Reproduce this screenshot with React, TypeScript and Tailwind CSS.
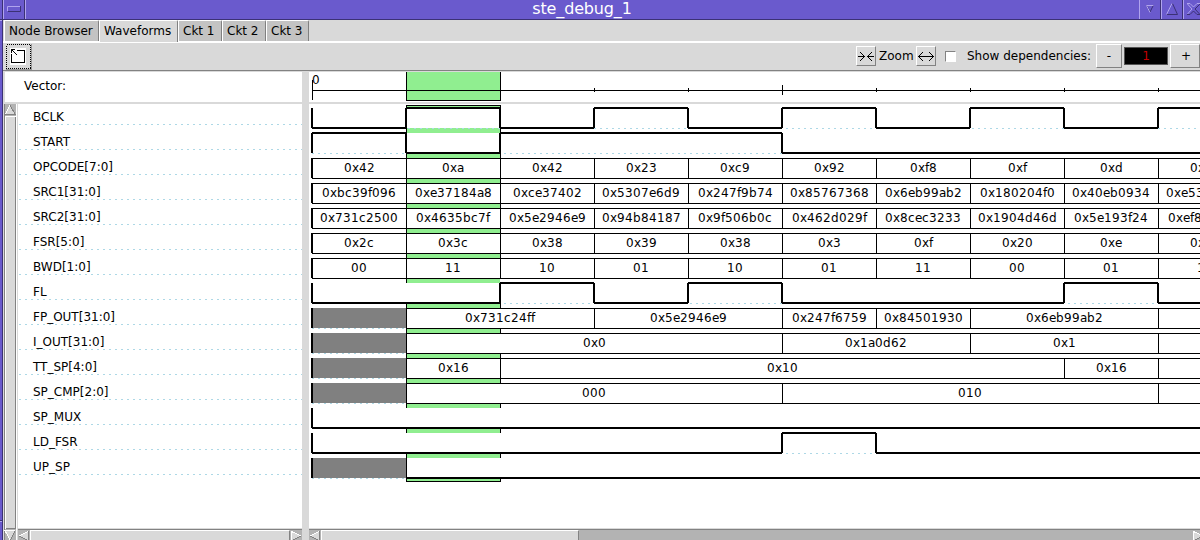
import React from 'react';

const FONT = "font-['DejaVu_Sans']";

type Cell = [number, number, string | null];
type Signal = { name: string; cells?: Cell[]; levels?: [number, number][]; unknown?: boolean };

const each = (values: string[]): Cell[] => values.map((v, i) => [i, i + 1, v] as Cell);

// Bus signals list [start, end, value] in clock phases; level signals list [start, level].
const signals: Signal[] = [
  { name: 'BCLK', levels: [[0, 0], [1, 1], [2, 0], [3, 1], [4, 0], [5, 1], [6, 0], [7, 1], [8, 0], [9, 1]] },
  { name: 'START', levels: [[0, 1], [1, 0], [2, 1], [5, 0]] },
  { name: 'OPCODE[7:0]', cells: each(['0x42', '0xa', '0x42', '0x23', '0xc9', '0x92', '0xf8', '0xf', '0xd', '0x42']) },
  {
    name: 'SRC1[31:0]',
    cells: each(['0xbc39f096', '0xe37184a8', '0xce37402', '0x5307e6d9', '0x247f9b74', '0x85767368', '0x6eb99ab2', '0x180204f0', '0x40eb0934', '0xe5310420']),
  },
  {
    name: 'SRC2[31:0]',
    cells: each(['0x731c2500', '0x4635bc7f', '0x5e2946e9', '0x94b84187', '0x9f506b0c', '0x462d029f', '0x8cec3233', '0x1904d46d', '0x5e193f24', '0xef810420']),
  },
  { name: 'FSR[5:0]', cells: each(['0x2c', '0x3c', '0x38', '0x39', '0x38', '0x3', '0xf', '0x20', '0xe', '0x20']) },
  { name: 'BWD[1:0]', cells: each(['00', '11', '10', '01', '10', '01', '11', '00', '01', '10']) },
  { name: 'FL', levels: [[0, 0], [2, 1], [3, 0], [4, 1], [5, 0], [8, 1], [9, 0]] },
  {
    name: 'FP_OUT[31:0]',
    unknown: true,
    cells: [[1, 3, '0x731c24ff'], [3, 5, '0x5e2946e9'], [5, 6, '0x247f6759'], [6, 7, '0x84501930'], [7, 9, '0x6eb99ab2'], [9, 10, null]],
  },
  { name: 'I_OUT[31:0]', unknown: true, cells: [[1, 5, '0x0'], [5, 7, '0x1a0d62'], [7, 9, '0x1'], [9, 10, null]] },
  { name: 'TT_SP[4:0]', unknown: true, cells: [[1, 2, '0x16'], [2, 8, '0x10'], [8, 9, '0x16'], [9, 10, null]] },
  { name: 'SP_CMP[2:0]', unknown: true, cells: [[1, 5, '000'], [5, 9, '010'], [9, 10, null]] },
  { name: 'SP_MUX', levels: [[0, 0]] },
  { name: 'LD_FSR', levels: [[0, 0], [5, 1], [6, 0]] },
  { name: 'UP_SP', unknown: true, levels: [[1, 0]] },
];

const PHASE = 94;
const phaseX = (p: number) => 312 + p * PHASE;

const ADVANCE: Record<string, number> = { a: 7, c: 7, e: 7, f: 4, x: 7 };

function Value({ text, center, baseline }: { text: string; center: number; baseline: number }) {
  const widths = text.split('').map((ch) => ADVANCE[ch] ?? 8);
  const total = widths.reduce((a, b) => a + b, 0);
  let x = Math.ceil(center - total / 2);
  const xs = widths.map((w) => {
    const at = x;
    x += w;
    return at;
  });
  return (
    <text x={xs.join(' ')} y={baseline} fontSize="12" fill="#000">
      {text}
    </text>
  );
}

function Trace({ signal, index }: { signal: Signal; index: number }) {
  const top = 108 + index * 25;
  const start = signal.unknown ? 1 : 0;
  return (
    <g>
      <rect x={312} y={top} width={888} height={20} fill="#fff" />
      {signal.unknown && <rect x={312} y={top} width={94} height={20} fill="#808080" />}
      <path d={`M312 ${top + 20.5}H1196`} stroke="#add8e6" strokeDasharray="2 4" />
      <rect x={311} y={top} width={2} height={20} />
      {signal.unknown && <rect x={406} y={top} width={1} height={20} />}
      {signal.cells && (
        <>
          <rect x={phaseX(start)} y={top} width={900} height={1} />
          <rect x={phaseX(start)} y={top + 20} width={900} height={1} />
          {signal.cells.map(([from, to, value]) => (
            <g key={from}>
              {from > 0 && <rect x={phaseX(from)} y={top} width={1} height={20} />}
              {value && <Value text={value} center={phaseX((from + to) / 2)} baseline={top + 14} />}
            </g>
          ))}
        </>
      )}
      {signal.levels?.map(([from, level], i, all) => {
        const end = i + 1 < all.length ? phaseX(all[i + 1][0]) : 1200;
        return (
          <g key={from}>
            {i > 0 && <rect x={phaseX(from) - 1} y={top} width={2} height={20} />}
            <rect x={phaseX(from)} y={level ? top - 1 : top + 19} width={end - phaseX(from)} height={2} />
          </g>
        );
      })}
    </g>
  );
}

function Tab({ label, width, active }: { label: string; width: string; active?: boolean }) {
  return (
    <div className={`relative ${width} ${active ? 'h-[22px] bg-[#d9d9d9]' : 'h-[21px] bg-[#c3c3c3]'} shrink-0 border-l border-t border-r border-l-white border-t-white border-r-[#808080] rounded-tr-[2px] pl-1 text-[12px] leading-[21px] whitespace-nowrap`}>
      {label}
    </div>
  );
}

const raised = 'border border-t-white border-l-white border-b-[#828282] border-r-[#828282] bg-[#d9d9d9]';

// One-pixel chevron; dir is the horizontal direction in which the arms trail away from the tip.
function Head({ x, y, dir }: { x: number; y: number; dir: 1 | -1 }) {
  return (
    <>
      {[0, 1, 2, 3, 4].map((i) => (
        <g key={i}>
          <rect x={x + dir * i} y={y - i} width="1" height="1" />
          <rect x={x + dir * i} y={y + i} width="1" height="1" />
        </g>
      ))}
    </>
  );
}

function HArrow({ right }: { right?: boolean }) {
  return (
    <svg width="12" height="12" className="shrink-0" shapeRendering="crispEdges">
      <rect width="12" height="12" fill="#b3b3b3" />
      {right ? (
        <>
          <path d="M1 1L11 6L1 11Z" fill="#d9d9d9" />
          <path d="M1.5 11V1.5L11 6" fill="none" stroke="#fff" />
          <path d="M11 6L1 11" stroke="#828282" />
        </>
      ) : (
        <>
          <path d="M11 1L1 6L11 11Z" fill="#d9d9d9" />
          <path d="M11 1L1 6" stroke="#fff" />
          <path d="M1 6L11 11M10.5 11V1" fill="none" stroke="#828282" />
        </>
      )}
    </svg>
  );
}

function TitleButton({ children }: { children: React.ReactNode }) {
  return (
    <div className="h-[19px] w-[22px] shrink-0 border-l border-l-[#b0a4ee] border-r border-r-[#3b3175]">
      <svg width="20" height="19" fill="none">
        {children}
      </svg>
    </div>
  );
}

export default function App() {
  return (
    <div className={`flex h-[540px] w-[1200px] overflow-hidden bg-[#d9d9d9] text-black ${FONT}`}>
      <div className="flex w-[3px] shrink-0 flex-col border-r border-r-[#3b3175] bg-[#6a5acd]">
        <div className="h-[19px]" />
        <div className="h-[2px] border-t border-t-[#3b3175] bg-[#b0a4ee]" />
        <div className="h-[499px]" />
        <div className="h-[2px] border-t border-t-[#3b3175] bg-[#b0a4ee]" />
      </div>
      <div className="flex min-w-0 flex-1 flex-col">
        <header className="flex h-5 shrink-0 border-b border-b-[#3b3175] bg-[#6a5acd]">
          <TitleButton>
            <path d="M3.5 11V6.5H16" stroke="#b0a4ee" />
            <path d="M4 11.5H16.5V6" stroke="#3b3175" />
          </TitleButton>
          <div className="h-[19px] w-px bg-[#b0a4ee]" />
          <div className="h-[19px] flex-1 pr-px text-center text-[16px] leading-[18px] tracking-[-0.15px] text-white">ste_debug_1</div>
          <TitleButton>
            <path d="M13.5 5L10 12L6.5 5" stroke="#3b3175" />
            <path d="M10 12.5L6.5 5.5H13.5" stroke="#b0a4ee" />
          </TitleButton>
          <TitleButton>
            <path d="M4.5 14.5H15.5L10.5 3.5" stroke="#3b3175" />
            <path d="M10 3.5L4.5 14.5" stroke="#b0a4ee" />
          </TitleButton>
          <div className="h-[19px] w-[17px] shrink-0 overflow-hidden border-l border-l-[#b0a4ee]">
            <svg width="20" height="19" fill="none">
              <path d="M3 3.5H6L9.5 7L13 3.5H16M3.5 4L8 9L3.5 14" stroke="#b0a4ee" />
              <path d="M16 4L11 9L16 14.5H13L9.5 11L6 14.5H3" stroke="#3b3175" />
            </svg>
          </div>
        </header>

        <nav className="flex h-[23px] shrink-0 border-b-2 border-b-white pl-px">
          <Tab label="Node Browser" width="w-[95px]" />
          <Tab label="Waveforms" width="w-[79px] z-10" active />
          <Tab label="Ckt 1" width="w-[44px]" />
          <Tab label="Ckt 2" width="w-[44px]" />
          <Tab label="Ckt 3" width="w-[43px]" />
        </nav>

        <div className="flex h-7 shrink-0 items-start border-b border-b-[#828282] text-[12px]">
          <svg width="28" height="27" className="ml-[2px] shrink-0" fill="none" shapeRendering="crispEdges">
            <path d="M1.5 1.5H25.5V25.5H1.5Z" stroke="#000" strokeDasharray="1 1" />
            <path d="M26.5 1V26.5H1" stroke="#999" />
            <rect x="5" y="5" width="16" height="17" fill="#fff" />
            <path d="M6.5 11V19.5H19.5V7.5H12" stroke="#000" />
            <g fill="#000">
              <rect x="6" y="6" width="4" height="1" />
              <rect x="6" y="6" width="1" height="4" />
              {[7, 8, 9, 10, 11].map((p) => (
                <rect key={p} x={p} y={p} width="1" height="1" />
              ))}
            </g>
          </svg>
          <div className="flex-1" />
          <div className={`mt-[3px] h-5 w-5 shrink-0 ${raised}`}>
            <svg width="18" height="18" shapeRendering="crispEdges">
              <rect x="1" y="9" width="7" height="1" />
              <rect x="10" y="9" width="7" height="1" />
              <Head x={7} y={9} dir={-1} />
              <Head x={10} y={9} dir={1} />
            </svg>
          </div>
          <div className="w-10 pl-[3px] leading-[26px]">Zoom</div>
          <div className={`mt-[3px] h-5 w-5 shrink-0 ${raised}`}>
            <svg width="18" height="18" shapeRendering="crispEdges">
              <rect x="1" y="9" width="16" height="1" />
              <Head x={1} y={9} dir={1} />
              <Head x={16} y={9} dir={-1} />
            </svg>
          </div>
          <div className="ml-[9px] mt-2 h-[11px] w-[11px] shrink-0 border border-t-[#828282] border-l-[#828282] border-b-white border-r-white bg-white" />
          <div className="w-[140px] shrink-0 pl-[11px] leading-[26px] whitespace-nowrap">Show dependencies:</div>
          <div className={`mt-px h-6 w-[26px] shrink-0 text-center leading-[23px] ${raised}`}>-</div>
          <div className="ml-[2px] mt-1 h-[18px] w-11 shrink-0 border border-[#555] bg-black text-center leading-[16px] text-[#c00000]">1</div>
          <div className={`ml-[2px] mt-px h-6 w-[30px] shrink-0 pl-[10px] leading-[23px] ${raised}`}>+</div>
        </div>

        <main className="flex min-h-0 flex-1 pl-[2px] pt-px">
          <section className="flex w-[297px] shrink-0 flex-col">
            <div className="h-[30px] shrink-0 bg-white pl-[19px] text-[12px] leading-[29px]">Vector:</div>
            <div className="mt-[2px] flex min-h-0 flex-1">
              <svg width="13" height="436" viewBox="4 104 13 436" className="-ml-px shrink-0" shapeRendering="crispEdges">
                <rect x="4" y="104" width="13" height="436" fill="#b3b3b3" />
                <path d="M4.5 104V540M4 103.5H17" stroke="#828282" />
                <path d="M10 105L15 115H5Z" fill="#d9d9d9" />
                <path d="M10 105L5 115" stroke="#fff" />
                <path d="M10 105L15.5 115M5 114.5H16" stroke="#828282" />
                <rect x="5" y="116" width="11" height="413" fill="#d9d9d9" />
                <path d="M5.5 529V116.5H16" stroke="#fff" fill="none" />
                <path d="M15.5 117V528.5H6" stroke="#828282" fill="none" />
                <path d="M5 530H15L10 540Z" fill="#d9d9d9" />
                <path d="M10 540L5 530.5H15" stroke="#fff" fill="none" />
                <path d="M15 531L10 541" stroke="#828282" />
                <path d="M16.5 104V540" stroke="#fff" />
              </svg>
              <div className="flex min-w-0 flex-1 flex-col pl-px">
                <div className="min-h-0 flex-1 bg-white">
                  {signals.map((s, i) => (
                    <div key={s.name} className={`flex flex-col ${i === 0 ? 'h-[21px]' : 'h-[25px]'} justify-end`}>
                      <div className="pl-[15px] text-[12px] leading-[13px] whitespace-nowrap">{s.name}</div>
                      <svg width="284" height="1" className="shrink-0" shapeRendering="crispEdges">
                        <path d="M0 .5H284" stroke="#add8e6" strokeDasharray="2 4" strokeDashoffset="-1" />
                      </svg>
                    </div>
                  ))}
                </div>
                <div className="mt-px flex h-[11px] shrink-0 overflow-hidden border-t border-t-[#828282] bg-[#b3b3b3]">
                  <HArrow />
                  <div className="h-3 flex-1 border-l border-t border-r border-l-white border-t-white border-r-[#828282] bg-[#d9d9d9]" />
                  <HArrow right />
                </div>
              </div>
            </div>
          </section>

          <section className="ml-[7px] flex min-w-0 flex-1 flex-col">
            <svg width="891" height="30" viewBox="309 72 891 30" className="shrink-0 bg-white" shapeRendering="crispEdges">
              <rect x="406" y="72" width="95" height="29" fill="#000" />
              <rect x="407" y="72" width="93" height="28" fill="#90ee90" />
              <rect x="312" y="90" width="888" height="1" />
              <rect x="312" y="80" width="1" height="20" />
              {[3, 4, 6, 7, 8, 9].map((p) => (
                <rect key={p} x={phaseX(p)} y="88" width="1" height="4" />
              ))}
              <rect x={phaseX(5)} y="85" width="1" height="10" />
              <text x="312" y="84" fontSize="12">0</text>
            </svg>
            <svg width="891" height="424" viewBox="309 104 891 424" className="mt-[2px] shrink-0 bg-white" shapeRendering="crispEdges">
              <rect x="406" y="105" width="95" height="377" fill="#000" />
              <rect x="407" y="106" width="93" height="375" fill="#90ee90" />
              <rect x="500" y="279" width="1" height="4" fill="#fff" />
              {signals.map((s, i) => (
                <Trace key={s.name} signal={s} index={i} />
              ))}
            </svg>
            <div className="mt-px flex h-[11px] shrink-0 overflow-hidden border-t border-t-[#828282] bg-[#b3b3b3]">
              <HArrow />
              <div className="h-3 w-[258px] shrink-0 border-l border-t border-r border-l-white border-t-white border-r-[#828282] bg-[#d9d9d9]" />
              <div className="flex-1" />
              <div className="-mr-1">
                <HArrow right />
              </div>
            </div>
          </section>
        </main>
      </div>
    </div>
  );
}
